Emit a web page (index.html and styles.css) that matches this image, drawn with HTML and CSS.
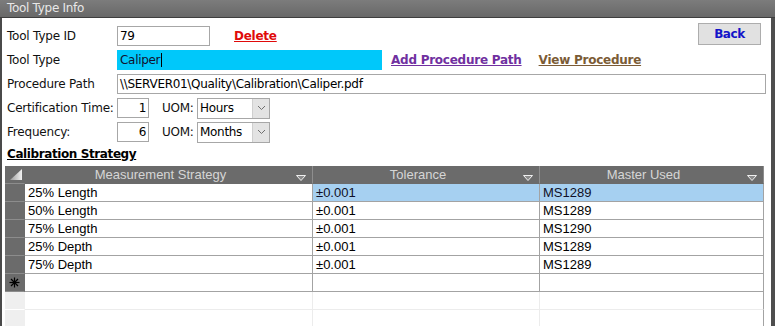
FILE: index.html
```html
<!DOCTYPE html>
<html lang="en">
<head>
  <meta charset="UTF-8">
  <meta name="viewport" content="width=device-width, initial-scale=1.0">
  <title>Tool Type Info</title>
  <link rel="stylesheet" href="styles.css">
</head>
<body>
  <div class="window">
    <div class="titlebar">Tool Type Info</div>

    <div class="content">
      <!-- Header fields -->
      <div class="row">
        <span class="label">Tool Type ID</span>
        <span class="field id-field">79</span>
        <a class="link delete" href="#">Delete</a>
        <button class="back" type="button">Back</button>
      </div>

      <div class="row">
        <span class="label">Tool Type</span>
        <span class="field type-field">Caliper<span class="caret"></span></span>
        <a class="link add-path" href="#">Add Procedure Path</a>
        <a class="link view-proc" href="#">View Procedure</a>
      </div>

      <div class="row">
        <span class="label">Procedure Path</span>
        <span class="field path-field">\\SERVER01\Quality\Calibration\Caliper.pdf</span>
      </div>

      <div class="row">
        <span class="label">Certification Time:</span>
        <span class="field num-field">1</span>
        <span class="uom">UOM:</span>
        <span class="combo">
          <span class="combo-text">Hours</span>
          <span class="combo-btn"><svg width="9" height="6" viewBox="0 0 9 6"><polyline points="1,1 4.5,4.5 8,1" fill="none" stroke="#6f6f6f" stroke-width="1"/></svg></span>
        </span>
      </div>

      <div class="row">
        <span class="label">Frequency:</span>
        <span class="field num-field">6</span>
        <span class="uom">UOM:</span>
        <span class="combo">
          <span class="combo-text">Months</span>
          <span class="combo-btn"><svg width="9" height="6" viewBox="0 0 9 6"><polyline points="1,1 4.5,4.5 8,1" fill="none" stroke="#6f6f6f" stroke-width="1"/></svg></span>
        </span>
      </div>

      <div class="section-title">Calibration Strategy</div>

      <!-- Calibration Strategy datasheet -->
      <div class="sheet">
        <div class="sheet-row sheet-head">
          <div class="selector corner">
            <svg width="12" height="11" viewBox="0 0 12 11"><defs><linearGradient id="tri" x1="0" y1="0" x2="1" y2="0"><stop offset="0" stop-color="#9a9a9a"/><stop offset="1" stop-color="#f2f2f2"/></linearGradient></defs><polygon points="0,11 12,0 12,11" fill="url(#tri)"/></svg>
          </div>
          <div class="hcell"><span class="htext">Measurement Strategy</span><svg class="filter" width="10" height="6" viewBox="0 0 10 6"><polygon points="0.5,0.5 9.5,0.5 5,5.5" fill="#8a8a8a" stroke="#f0f0f0" stroke-width="1"/></svg></div>
          <div class="hcell"><span class="htext">Tolerance</span><svg class="filter" width="10" height="6" viewBox="0 0 10 6"><polygon points="0.5,0.5 9.5,0.5 5,5.5" fill="#8a8a8a" stroke="#f0f0f0" stroke-width="1"/></svg></div>
          <div class="hcell"><span class="htext">Master Used</span><svg class="filter" width="10" height="6" viewBox="0 0 10 6"><polygon points="0.5,0.5 9.5,0.5 5,5.5" fill="#8a8a8a" stroke="#f0f0f0" stroke-width="1"/></svg></div>
        </div>

        <div class="sheet-row current">
          <div class="selector"></div>
          <div class="cell">25% Length</div>
          <div class="cell">±0.001</div>
          <div class="cell">MS1289</div>
        </div>
        <div class="sheet-row">
          <div class="selector"></div>
          <div class="cell">50% Length</div>
          <div class="cell">±0.001</div>
          <div class="cell">MS1289</div>
        </div>
        <div class="sheet-row">
          <div class="selector"></div>
          <div class="cell">75% Length</div>
          <div class="cell">±0.001</div>
          <div class="cell">MS1290</div>
        </div>
        <div class="sheet-row">
          <div class="selector"></div>
          <div class="cell">25% Depth</div>
          <div class="cell">±0.001</div>
          <div class="cell">MS1289</div>
        </div>
        <div class="sheet-row">
          <div class="selector"></div>
          <div class="cell">75% Depth</div>
          <div class="cell">±0.001</div>
          <div class="cell">MS1289</div>
        </div>
        <div class="sheet-row new-row">
          <div class="selector">
            <svg width="11" height="11" viewBox="0 0 11 11"><g stroke="#000" stroke-width="1.2"><line x1="5.5" y1="0.5" x2="5.5" y2="10.5"/><line x1="0.5" y1="5.5" x2="10.5" y2="5.5"/><line x1="2" y1="2" x2="9" y2="9"/><line x1="9" y1="2" x2="2" y2="9"/></g></svg>
          </div>
          <div class="cell"></div>
          <div class="cell"></div>
          <div class="cell"></div>
        </div>
        <div class="sheet-row blank">
          <div class="selector"></div>
          <div class="cell"></div>
          <div class="cell"></div>
          <div class="cell"></div>
        </div>
        <div class="sheet-row blank">
          <div class="selector"></div>
          <div class="cell"></div>
          <div class="cell"></div>
          <div class="cell"></div>
        </div>
      </div>
    </div>
  </div>
</body>
</html>
```

FILE: styles.css
```css
* {
  box-sizing: border-box;
}

body {
  margin: 0;
  width: 775px;
  height: 326px;
  overflow: hidden;
  background: #ffffff;
  font-family: "DejaVu Sans", Verdana, sans-serif;
  font-size: 12px;
  color: #111;
}

.window {
  height: 326px;
  border-left: 2px solid #4a4a4a;
  border-right: 4px solid #4e4e4e;
  background: #fff;
}

.titlebar {
  height: 18px;
  margin-left: -2px;
  margin-right: -4px;
  padding: 1px 0 0 7px;
  background: linear-gradient(#7c7c7c, #686868);
  border-bottom: 1px solid #3e3e3e;
  color: #e8e8e8;
  font-size: 12px;
  line-height: 15px;
  letter-spacing: -0.3px;
}

.content {
  padding: 8px 5px 0 5px;
}

.row {
  display: flex;
  align-items: center;
  height: 20px;
  margin-bottom: 4px;
}

.label {
  width: 110px;
  flex: none;
  letter-spacing: -0.2px;
}

.field {
  height: 20px;
  border: 1px solid #a7a7a7;
  padding: 0 2px;
  line-height: 18px;
  white-space: nowrap;
  letter-spacing: -0.3px;
  color: #000;
}

.id-field {
  width: 93px;
}

.type-field {
  width: 265px;
  background: #00c8fa;
  border-color: #00c8fa;
  color: #101030;
}

.caret {
  display: inline-block;
  width: 1px;
  height: 14px;
  margin-left: 1px;
  vertical-align: -3px;
  background: #000;
}

.path-field {
  flex: 1;
}

.num-field {
  width: 32px;
  text-align: right;
}

.link {
  font-weight: bold;
  text-decoration: underline;
  letter-spacing: -0.25px;
}

.delete {
  margin-left: 24px;
  color: #e00a0a;
}

.add-path {
  margin-left: 9px;
  color: #7030a0;
}

.view-proc {
  margin-left: 17px;
  color: #7b5b35;
}

.back {
  margin-left: auto;
  margin-right: 5px;
  margin-top: -5px;
  width: 63px;
  height: 22px;
  background: #e1e1e1;
  border: 1px solid #adadad;
  color: #1414c8;
  font-family: "DejaVu Sans", Verdana, sans-serif;
  font-size: 12px;
  font-weight: bold;
  letter-spacing: -0.4px;
  padding: 0;
}

.uom {
  margin-left: 13px;
  width: 35px;
  letter-spacing: -0.3px;
}

.combo {
  display: flex;
  width: 73px;
  height: 21px;
  border: 1px solid #a7a7a7;
}

.combo-text {
  flex: 1;
  padding-left: 2px;
  line-height: 19px;
  letter-spacing: -0.3px;
  color: #000;
}

.combo-btn {
  width: 17px;
  display: flex;
  align-items: center;
  justify-content: center;
  background: #e3e3e3;
  border-left: 1px solid #cfcfcf;
}

.section-title {
  margin-top: 1px;
  height: 16px;
  line-height: 16px;
  font-weight: bold;
  text-decoration: underline;
  letter-spacing: -0.4px;
  color: #000;
}

.sheet {
  margin-top: 4px;
  margin-left: -2px;
  width: 759px;
  font-family: "Liberation Sans", Arial, sans-serif;
  font-size: 13px;
}

.sheet-row {
  display: grid;
  grid-template-columns: 20px 288px 227px 224px;
  height: 18px;
}

.sheet-row > div {
  border-bottom: 1px solid #a3a3a3;
  border-right: 1px solid #a3a3a3;
  line-height: 17px;
  white-space: nowrap;
}

.selector {
  background: #6b6b6b;
  border-bottom-color: #8c8c8c !important;
  border-right-color: #6b6b6b !important;
}

.sheet-head > div {
  background: #6b6b6b;
  border-bottom-color: #6b6b6b;
  border-right-color: #8e8e8e;
  color: #d6d6d6;
}

.corner {
  display: flex;
  align-items: flex-end;
  padding: 0 0 3px 5px;
}

.hcell {
  display: flex;
  align-items: center;
  padding-right: 6px;
}

.htext {
  flex: 1;
  text-align: center;
}

.filter {
  margin-top: 6px;
}

.cell {
  padding-left: 3px;
  color: #000;
}

.current .cell + .cell {
  background: #a6d0f1;
  color: #101028;
}

.new-row .selector {
  display: flex;
  align-items: center;
  justify-content: center;
}

.blank > div {
  border-bottom-color: #ececec;
  border-right-color: #ececec;
}

.blank .selector {
  background: #efefef;
  border-bottom-color: #ffffff !important;
  border-right-color: #efefef !important;
}

.blank .cell:last-child {
  border-right-color: #a3a3a3;
}
```
